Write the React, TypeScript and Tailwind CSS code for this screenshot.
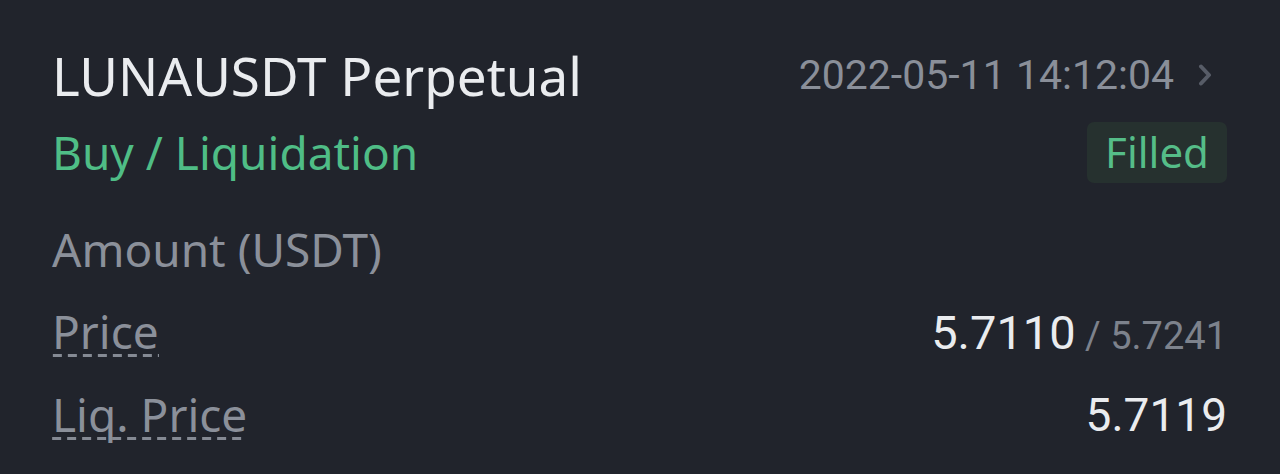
const dashed =
  "pb-[3px] bg-[linear-gradient(to_right,#858a94_0_9px,transparent_9px_15px)] bg-[length:15px_3px] bg-repeat-x bg-bottom";

export default function App() {
  return (
    <div className="w-[1280px] h-[474px] bg-[#21242c] overflow-hidden font-['Noto_Sans',sans-serif]">
      <div className="pl-[52px] pr-[53px] pt-[44px] flex flex-col">
        <div className="flex items-center justify-between h-[62px]">
          <span className="text-[53px] leading-none text-[#eaecef]">LUNAUSDT Perpetual</span>
          <div className="flex items-center gap-[24px] pr-[15px]">
            <span className="text-[41px] leading-none text-[#8a8f99] font-['Roboto',sans-serif]">2022-05-11 14:12:04</span>
            <svg width="14" height="22" viewBox="0 0 14 22" fill="none">
              <path d="M3 2.5l8 8.5-8 8.5" stroke="#575c67" strokeWidth="4" strokeLinecap="round" strokeLinejoin="round" />
            </svg>
          </div>
        </div>
        <div className="flex items-center justify-between mt-[15px] h-[62px]">
          <span className="text-[46px] leading-none text-[#4fbd86]">Buy / Liquidation</span>
          <span className="h-[61px] w-[140px] flex items-center justify-center rounded-[7px] bg-[#26312f] text-[42px] leading-none text-[#55bd88]">Filled</span>
        </div>
        <div className="flex items-center justify-between mt-[41px] h-[50px]">
          <span className="text-[46px] leading-none text-[#8b909a]">Amount (USDT)</span>
        </div>
        <div className="flex items-center justify-between mt-[32px] h-[52px]">
          <span className={"text-[46px] leading-none text-[#8b909a] " + dashed}>Price</span>
          <span className="font-['Roboto',sans-serif] leading-none">
            <span className="text-[47px] text-[#eaecef]">5.7110</span>
            <span className="text-[38px] text-[#7d828c]"> / 5.7241</span>
          </span>
        </div>
        <div className="flex items-center justify-between mt-[31px] h-[52px]">
          <span className={"text-[46px] leading-none text-[#8b909a] " + dashed}>Liq. Price</span>
          <span className="font-['Roboto',sans-serif] text-[46px] leading-none text-[#eaecef]">5.7119</span>
        </div>
      </div>
    </div>
  );
}
